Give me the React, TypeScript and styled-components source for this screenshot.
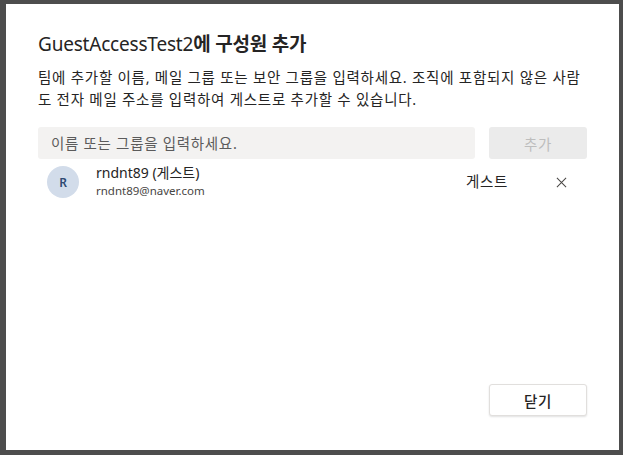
import React from 'react';
import styled, { createGlobalStyle } from 'styled-components';

const GlobalStyle = createGlobalStyle`
  html, body {
    margin: 0;
    padding: 0;
    background: #4d4d4d;
  }
  body {
    font-family: "Noto Sans", "Noto Sans CJK KR", sans-serif;
    color: #252424;
  }
`;

const Backdrop = styled.div`
  width: 623px;
  height: 455px;
  box-sizing: border-box;
  padding: 4px 4px 5px 6px;
  display: flex;
`;

const Dialog = styled.div`
  flex: 1;
  background: #ffffff;
  display: flex;
  flex-direction: column;
  padding: 27px 32px 34px 32px;
  box-sizing: border-box;
`;

const Title = styled.h1`
  margin: 0;
  font-size: 19px;
  font-weight: 700;
  line-height: 26px;
  color: #252424;
  letter-spacing: -0.2px;
`;

const TeamName = styled.span`
  font-weight: 400;
`;

const Description = styled.p`
  margin: 9px 0 0;
  font-size: 14.5px;
  line-height: 22px;
  color: #252424;
  letter-spacing: 0.75px;
  white-space: nowrap;
`;

const SearchRow = styled.div`
  display: flex;
  gap: 14px;
  margin-top: 17px;
`;

const SearchInput = styled.input`
  flex: 1;
  height: 32px;
  box-sizing: border-box;
  border: none;
  outline: none;
  border-radius: 3px;
  background: #f3f2f1;
  padding: 0 13px;
  font-family: inherit;
  font-size: 14.5px;
  letter-spacing: 0.7px;
  color: #252424;

  &::placeholder {
    color: #5b5b5b;
  }
`;

const AddButton = styled.button`
  width: 98px;
  height: 32px;
  border: none;
  border-radius: 3px;
  background: #ebebeb;
  color: #bdbdbd;
  font-family: inherit;
  font-size: 14.5px;
  letter-spacing: 0.6px;
`;

const MemberRow = styled.div`
  display: flex;
  align-items: center;
  height: 46px;
  padding-left: 9px;
`;

const Avatar = styled.div`
  width: 32px;
  height: 32px;
  border-radius: 50%;
  background: #d2dcea;
  color: #2f4a72;
  font-size: 12px;
  font-weight: 600;
  display: flex;
  align-items: center;
  justify-content: center;
`;

const MemberInfo = styled.div`
  display: flex;
  flex-direction: column;
  margin-left: 17px;
  flex: 1;
`;

const MemberName = styled.span`
  font-size: 14px;
  line-height: 18px;
  color: #252424;
  margin-top: -2px;
`;

const MemberEmail = styled.span`
  font-size: 11.5px;
  line-height: 17px;
  color: #484644;
`;

const RoleLabel = styled.span`
  font-size: 14.5px;
  letter-spacing: 0.6px;
  color: #252424;
  width: 85px;
  margin-top: -3px;
`;

const RemoveButton = styled.button`
  width: 20px;
  height: 20px;
  margin-right: 16px;
  border: none;
  background: none;
  padding: 0;
  display: flex;
  align-items: center;
  justify-content: center;
  color: #484644;
`;

const Spacer = styled.div`
  flex: 1;
`;

const Footer = styled.div`
  display: flex;
  justify-content: flex-end;
`;

const CloseButton = styled.button`
  width: 98px;
  height: 32px;
  background: #ffffff;
  border: 1px solid #e1dfdd;
  border-radius: 3px;
  box-shadow: 0 1px 2px rgba(0, 0, 0, 0.12);
  font-family: inherit;
  font-size: 14.5px;
  font-weight: 500;
  letter-spacing: 0.6px;
  color: #252424;
`;

const CloseIcon = () => (
  <svg width="11" height="11" viewBox="0 0 12 12" fill="none" stroke="currentColor" strokeWidth={1.1}>
    <path d="M1 1l10 10M11 1L1 11" />
  </svg>
);

export default function App() {
  return (
    <>
      <GlobalStyle />
      <Backdrop>
        <Dialog>
          <Title>
            <TeamName>GuestAccessTest2</TeamName>에 구성원 추가
          </Title>
          <Description>
            팀에 추가할 이름, 메일 그룹 또는 보안 그룹을 입력하세요. 조직에 포함되지 않은 사람
            <br />
            도 전자 메일 주소를 입력하여 게스트로 추가할 수 있습니다.
          </Description>
          <SearchRow>
            <SearchInput placeholder="이름 또는 그룹을 입력하세요." />
            <AddButton type="button">추가</AddButton>
          </SearchRow>
          <MemberRow>
            <Avatar>R</Avatar>
            <MemberInfo>
              <MemberName>rndnt89 (게스트)</MemberName>
              <MemberEmail>rndnt89@naver.com</MemberEmail>
            </MemberInfo>
            <RoleLabel>게스트</RoleLabel>
            <RemoveButton type="button">
              <CloseIcon />
            </RemoveButton>
          </MemberRow>
          <Spacer />
          <Footer>
            <CloseButton type="button">닫기</CloseButton>
          </Footer>
        </Dialog>
      </Backdrop>
    </>
  );
}
